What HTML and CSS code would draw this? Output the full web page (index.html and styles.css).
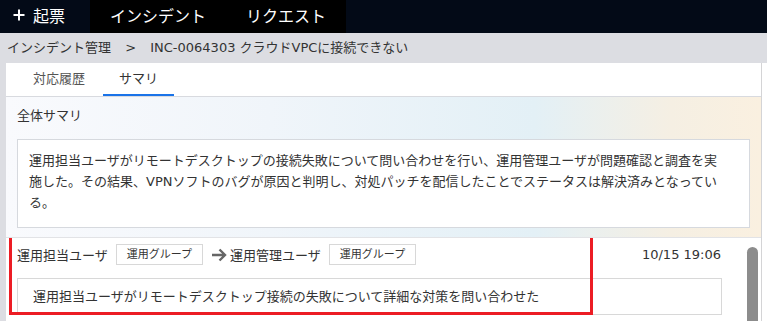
FILE: index.html
```html
<!DOCTYPE html>
<html lang="ja">
<head>
    <meta charset="UTF-8">
    <title>インシデント管理</title>
    <link rel="stylesheet" href="styles.css">
</head>
<body>
    <div class="topbar">
        <div class="new-ticket">
            <svg class="plus" width="12" height="12" viewBox="0 0 12 12">
                <path d="M6 0.5V11.5M0.5 6H11.5" stroke="#fff" stroke-width="2"/>
            </svg>
            <span>起票</span>
        </div>
        <div class="nav">
            <div class="nav-item">インシデント</div>
            <div class="nav-item">リクエスト</div>
        </div>
    </div>

    <div class="breadcrumb">
        <span>インシデント管理</span>
        <span class="sep">&gt;</span>
        <span>INC-0064303 クラウドVPCに接続できない</span>
    </div>

    <div class="layout">
        <div class="gutter"></div>
        <div class="panel">
            <div class="tabs">
                <div class="tab">対応履歴</div>
                <div class="tab active">サマリ</div>
            </div>

            <div class="summary">
                <div class="summary-title">全体サマリ</div>
                <div class="summary-box">運用担当ユーザがリモートデスクトップの接続失敗について問い合わせを行い、運用管理ユーザが問題確認と調査を実施した。その結果、VPNソフトのバグが原因と判明し、対処パッチを配信したことでステータスは解決済みとなっている。</div>
            </div>

            <div class="history">
                <div class="entries">
                    <div class="entry">
                        <div class="entry-head">
                            <span class="user">運用担当ユーザ</span>
                            <span class="group">運用グループ</span>
                            <svg class="arrow" width="16" height="14" viewBox="0 0 16 14">
                                <path d="M1 7H14M8.5 1.5L14 7L8.5 12.5" fill="none" stroke="#666" stroke-width="2.4"/>
                            </svg>
                            <span class="user">運用管理ユーザ</span>
                            <span class="group">運用グループ</span>
                            <span class="date">10/15 19:06</span>
                        </div>
                        <div class="message">運用担当ユーザがリモートデスクトップ接続の失敗について詳細な対策を問い合わせた</div>
                        <div class="highlight"></div>
                    </div>
                </div>
                <div class="scrollbar">
                    <div class="thumb"></div>
                </div>
            </div>
        </div>
    </div>
</body>
</html>
```

FILE: styles.css
```css
* {
    box-sizing: border-box;
    margin: 0;
    padding: 0;
}

body {
    font-family: 'DejaVu Sans', 'Noto Sans CJK JP', sans-serif;
    font-size: 13px;
    color: #333;
    background-color: #fff;
    height: 321px;
    overflow: hidden;
}

/* 上部ナビ */
.topbar {
    display: flex;
    height: 33px;
    background-color: #030a17;
    color: #fff;
    font-size: 16px;
}
.new-ticket {
    width: 90px;
    display: flex;
    align-items: center;
    padding: 0 0 3px 13px;
}
.plus {
    margin-right: 8px;
}
.nav {
    display: flex;
    background-color: #000;
}
.nav-item {
    display: flex;
    align-items: center;
    padding: 0 20px 3px;
}

/* パンくず */
.breadcrumb {
    height: 30px;
    line-height: 30px;
    padding-left: 7px;
    background-color: #dcdde2;
    white-space: nowrap;
}
.sep {
    margin: 0 10px 0 10px;
}

.layout {
    display: flex;
    height: 258px;
}
.gutter {
    width: 6px;
    background-color: #dcdde2;
}
.panel {
    width: 756px;
    border-right: 1px solid #d4d4d6;
    display: flex;
    flex-direction: column;
}

/* タブ */
.tabs {
    display: flex;
    gap: 2px;
    height: 34px;
    padding-left: 11px;
    border-bottom: 1px solid #d8dadf;
}
.tab {
    height: 33px;
    line-height: 31px;
    padding: 0 16px;
    color: #555;
    border-bottom: 2px solid transparent;
}
.tab.active {
    color: #333;
    border-bottom-color: #1a73e8;
}

/* サマリ */
.summary {
    padding: 9px 11px 9px 11px;
    background: linear-gradient(to right, #f9fafd 0%, #f0f5fa 35%, #e3f0f6 70%, #f5efe3 88%, #faf0e0 100%);
    border-bottom: 1px solid #e2e3e6;
}
.summary-title {
    line-height: 20px;
    margin-bottom: 13px;
}
.summary-box {
    height: 89px;
    padding: 10px 25px 14px 11px;
    line-height: 21px;
    background-color: #fff;
    border: 1px solid #d6d9de;
}

/* 対応履歴 */
.history {
    flex: 1;
    display: flex;
    overflow: hidden;
}
.entries {
    flex: 1;
}
.entry {
    position: relative;
    padding: 6px 23px 0 11px;
}
.entry-head {
    display: flex;
    align-items: center;
    height: 21px;
    white-space: nowrap;
}
.group {
    height: 21px;
    line-height: 19px;
    padding: 0 10px;
    margin: 0 8px;
    font-size: 11px;
    border: 1px solid #d8d8d8;
    background-color: #fff;
}
.arrow {
    margin: 1px 3px 0 0;
}
.date {
    margin-left: auto;
    margin-right: 1px;
}
.message {
    margin-top: 13px;
    height: 37px;
    padding: 7px 15px;
    line-height: 21px;
    border: 1px solid #d8d8d8;
}

/* 注目枠 */
.highlight {
    position: absolute;
    left: 3px;
    top: -6px;
    width: 584px;
    height: 83px;
    border: 3px solid #ec1c24;
    pointer-events: none;
}

.scrollbar {
    width: 16px;
    padding: 9px 2px 0 2px;
}
.thumb {
    width: 11px;
    height: 120px;
    background-color: #8c8c8c;
    border-radius: 6px 6px 0 0;
}
```
